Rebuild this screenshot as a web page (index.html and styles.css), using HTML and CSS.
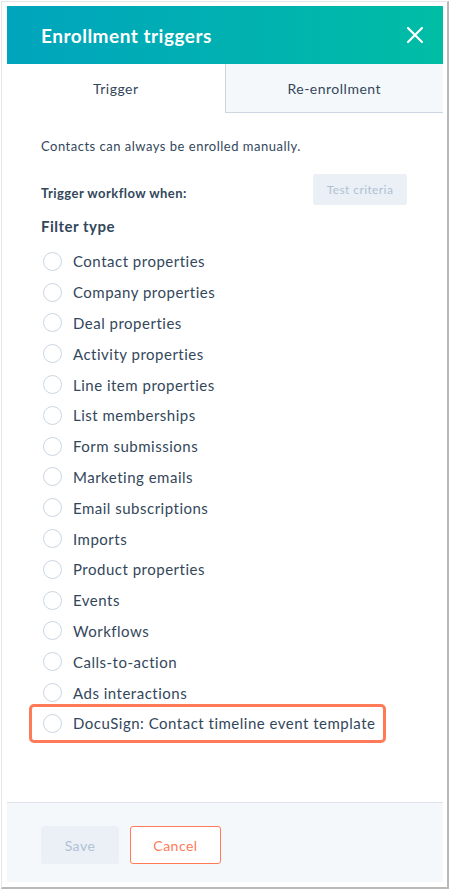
FILE: index.html
```html
<!DOCTYPE html>
<html lang="en">
<head>
<meta charset="utf-8">
<title>Enrollment triggers</title>
<link rel="stylesheet" href="styles.css">
</head>
<body>
<div class="frame">
  <div class="panel">
    <header class="header">
      <h1 class="title">Enrollment triggers</h1>
      <svg class="close" width="16" height="16" viewBox="0 0 16 16" aria-label="Close">
        <path d="M1 1 L15 15 M15 1 L1 15" stroke="#ffffff" stroke-width="2.2" stroke-linecap="round" fill="none"/>
      </svg>
    </header>
    <nav class="tabs">
      <div class="tab tab-active">Trigger</div>
      <div class="tab tab-inactive">Re-enrollment</div>
    </nav>
    <main class="content">
      <p class="note">Contacts can always be enrolled manually.</p>
      <div class="when-row">
        <span class="when">Trigger workflow when:</span>
        <button class="btn-test">Test criteria</button>
      </div>
      <h2 class="filter-title">Filter type</h2>
      <ul class="options">
        <li class="option"><span class="radio"></span>Contact properties</li>
        <li class="option"><span class="radio"></span>Company properties</li>
        <li class="option"><span class="radio"></span>Deal properties</li>
        <li class="option"><span class="radio"></span>Activity properties</li>
        <li class="option"><span class="radio"></span>Line item properties</li>
        <li class="option"><span class="radio"></span>List memberships</li>
        <li class="option"><span class="radio"></span>Form submissions</li>
        <li class="option"><span class="radio"></span>Marketing emails</li>
        <li class="option"><span class="radio"></span>Email subscriptions</li>
        <li class="option"><span class="radio"></span>Imports</li>
        <li class="option"><span class="radio"></span>Product properties</li>
        <li class="option"><span class="radio"></span>Events</li>
        <li class="option"><span class="radio"></span>Workflows</li>
        <li class="option"><span class="radio"></span>Calls-to-action</li>
        <li class="option"><span class="radio"></span>Ads interactions</li>
        <li class="option highlight"><span class="radio"></span>DocuSign: Contact timeline event template</li>
      </ul>
    </main>
    <footer class="footer">
      <button class="btn-save">Save</button>
      <button class="btn-cancel">Cancel</button>
    </footer>
  </div>
</div>
</body>
</html>
```

FILE: styles.css
```css
* { box-sizing: border-box; }

html, body {
  margin: 0;
  padding: 0;
  background: #ffffff;
}

body {
  font-family: Lato, "Open Sans", "Liberation Sans", sans-serif;
  color: #33475b;
  width: 450px;
  height: 890px;
  overflow: hidden;
  letter-spacing: 0.5px;
}

.frame {
  margin: 1px 0 0 1px;
  width: 448px;
  height: 888px;
  border-top: 1px solid #e6e6e6;
  border-left: 1px solid #e6e6e6;
  border-right: 2px solid #b9b9b9;
  border-bottom: 2px solid #b9b9b9;
  padding: 4px 4px 4px 5px;
}

.panel {
  width: 436px;
  height: 876px;
  display: flex;
  flex-direction: column;
  background: #ffffff;
}

.header {
  height: 58px;
  flex: none;
  display: flex;
  align-items: center;
  justify-content: space-between;
  padding: 0 20px 0 34px;
  background: linear-gradient(to right, #00a4bd, #00bda5);
}

.title {
  margin: 0;
  font-size: 19px;
  font-weight: 700;
  color: #ffffff;
  letter-spacing: 0.5px;
}

.close { display: block; }

.tabs {
  display: flex;
  height: 49px;
  flex: none;
}

.tab {
  flex: 1;
  display: flex;
  align-items: center;
  justify-content: center;
  font-size: 14px;
  color: #33475b;
}

.tab-active {
  background: #ffffff;
}

.tab-inactive {
  background: #f5f8fa;
  border-left: 1px solid #cbd6e2;
  border-bottom: 1px solid #cbd6e2;
}

.content {
  flex: 1;
  padding: 0 36px 0 34px;
}

.note {
  margin: 23px 0 0;
  font-size: 13px;
  line-height: 20px;
}

.when-row {
  display: flex;
  justify-content: space-between;
  align-items: center;
  margin-top: 18px;
}

.when {
  font-size: 13px;
  font-weight: 700;
  padding-top: 6px;
  letter-spacing: 0.45px;
}

.btn-test {
  width: 94px;
  height: 31px;
  border: none;
  border-radius: 3px;
  background: #eaf0f6;
  color: #b0c1d4;
  font-family: inherit;
  font-size: 12px;
  letter-spacing: 0.4px;
  padding: 0;
}

.filter-title {
  margin: 11px 0 0;
  font-size: 15px;
  line-height: 20px;
  font-weight: 700;
}

.options {
  list-style: none;
  margin: 10px 0 0;
  padding: 0;
}

.option {
  display: flex;
  align-items: center;
  width: max-content;
  height: 30.8px;
  font-size: 15px;
  padding-left: 2px;
}

.radio {
  width: 19px;
  height: 19px;
  border: 1.5px solid #cbd6e2;
  border-radius: 50%;
  background: #ffffff;
  margin-right: 11px;
  flex: none;
}

.highlight {
  position: relative;
}

.highlight::after {
  content: "";
  position: absolute;
  top: -4px;
  bottom: -4px;
  left: -12px;
  right: -11px;
  border: 3px solid #ff7a59;
  border-radius: 5px;
}

.footer {
  height: 80px;
  flex: none;
  background: #f5f8fa;
  border-top: 1px solid #dfe3eb;
  display: flex;
  align-items: flex-start;
  gap: 11px;
  padding: 23px 34px 0;
}

.btn-save,
.btn-cancel {
  height: 38px;
  border-radius: 3px;
  font-family: inherit;
  font-size: 14px;
  letter-spacing: 0.5px;
  padding: 0;
}

.btn-save {
  width: 78px;
  background: #eaf0f6;
  border: none;
  color: #b0c1d4;
}

.btn-cancel {
  width: 91px;
  background: #ffffff;
  border: 1px solid #ff7a59;
  color: #ff7a59;
}
```
